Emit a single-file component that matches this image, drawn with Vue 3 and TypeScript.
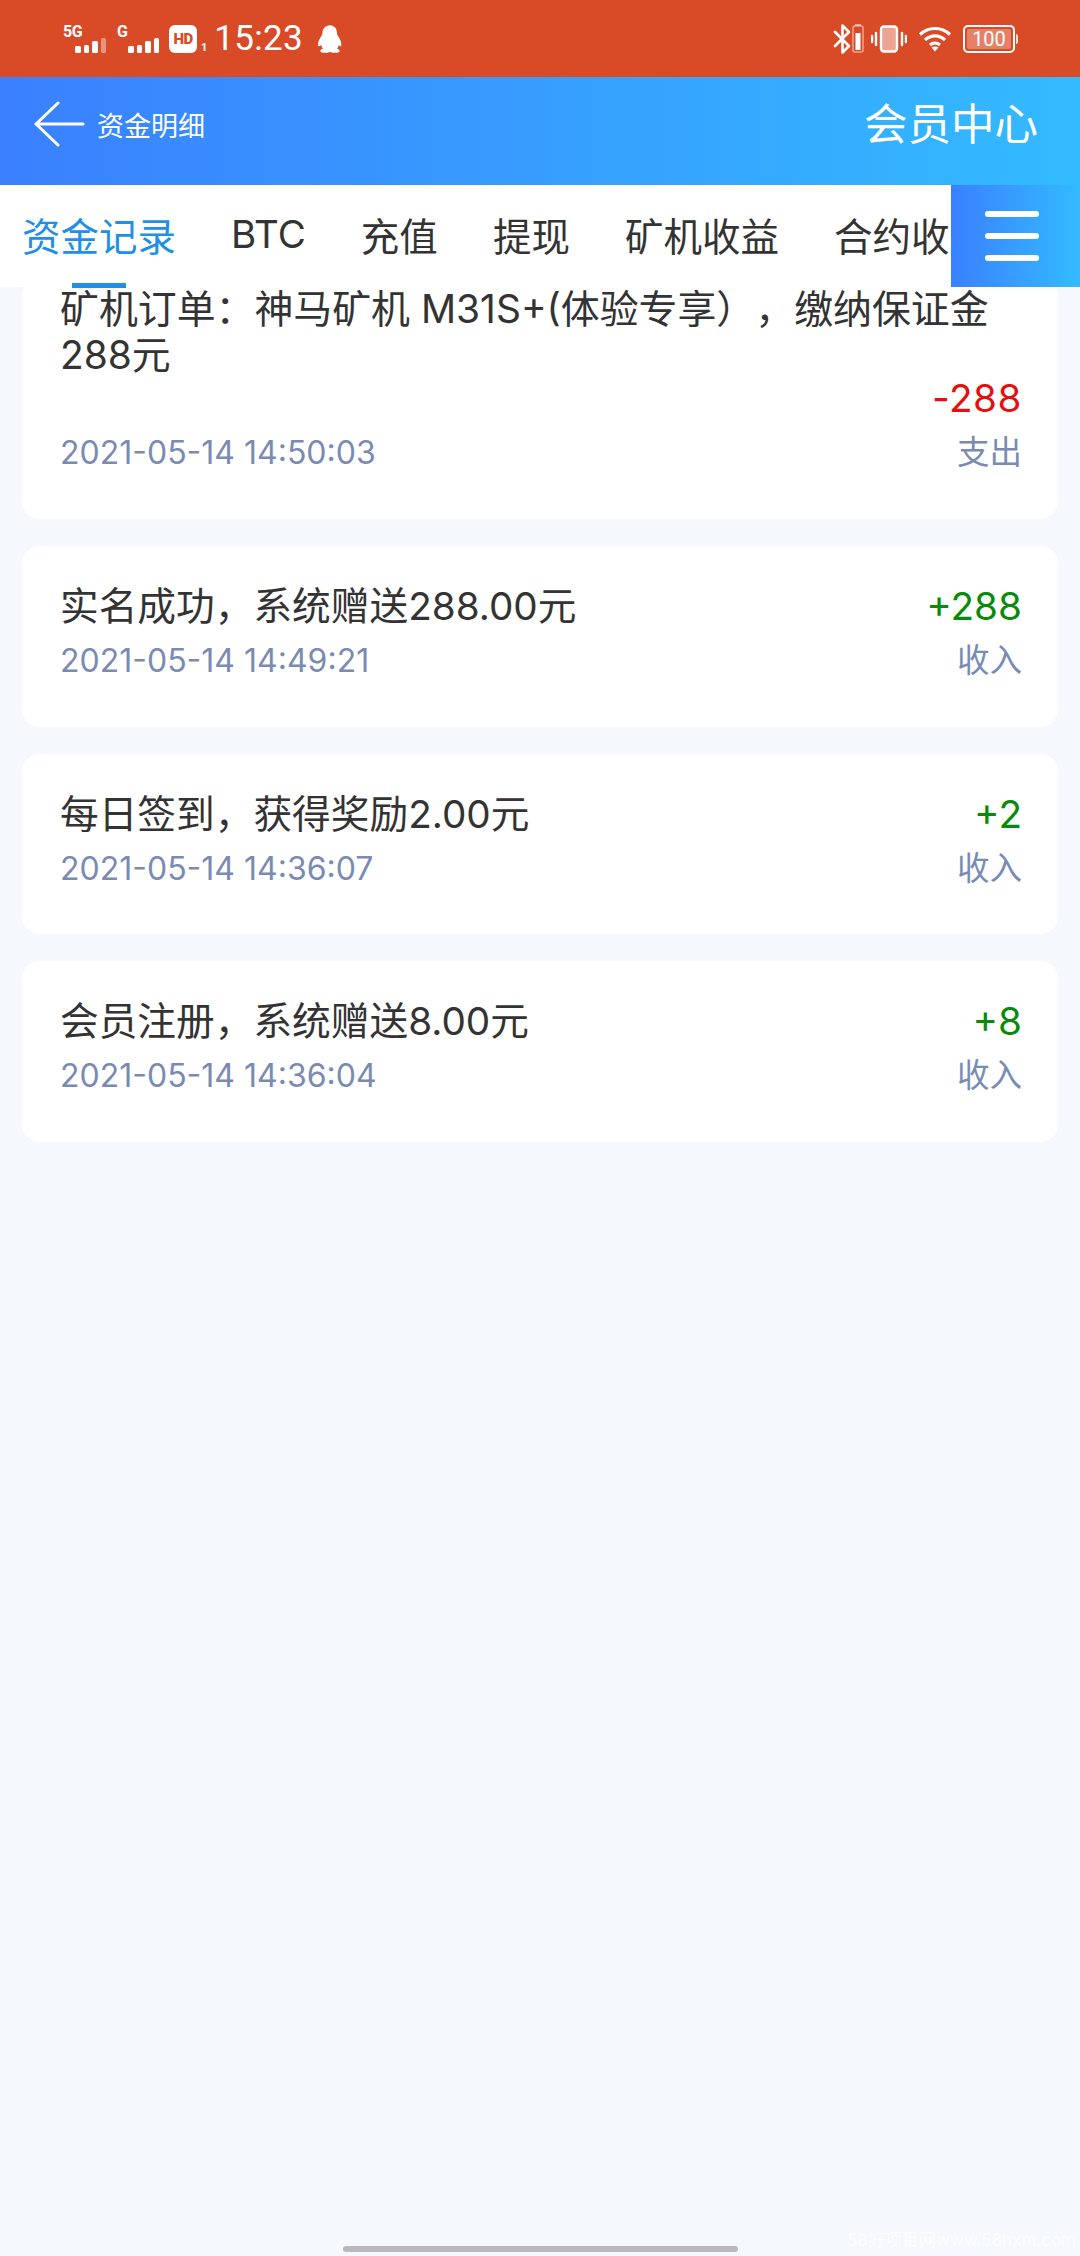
<script setup lang="ts">
interface Rec { title: string; time: string; amount: string; kind: string }
const tabs: string[] = ['资金记录', 'BTC', '充值', '提现', '矿机收益', '合约收益']
const records: Rec[] = [
  { title: '实名成功，系统赠送288.00元', time: '2021-05-14 14:49:21', amount: '+288', kind: '收入' },
  { title: '每日签到，获得奖励2.00元', time: '2021-05-14 14:36:07', amount: '+2', kind: '收入' },
  { title: '会员注册，系统赠送8.00元', time: '2021-05-14 14:36:04', amount: '+8', kind: '收入' },
]
</script>

<template>
  <div class="page">
    <div class="status">
      <div class="st-left">
        <div class="sig">
          <span class="sig-label">5G</span>
          <span class="bars"><i class="b1"></i><i class="b2"></i><i class="b3"></i><i class="b4 dim"></i></span>
        </div>
        <div class="sig sig2">
          <span class="sig-label">G</span>
          <span class="bars"><i class="b1"></i><i class="b2"></i><i class="b3"></i><i class="b4"></i></span>
        </div>
        <span class="hd">HD</span><span class="hd-n">1</span>
        <span class="clock">15:23</span>
        <svg class="qq" width="24" height="28" viewBox="0 0 26 30">
          <path fill="#fff" d="M13 0c5 0 7.500 4 7.500 8.500 0 1 .2 1.600.8 2.600 2.200 3 4 6.500 4 10 0 2-1 2.500-2.700.5-.4 1.500-1 2.800-2 3.800 1.500.6 2.800 1.300 2.800 2.500 0 1.500-3 2.100-6 2.100-2 0-3.300-.6-4.400-1.300-1.100.7-2.400 1.300-4.400 1.300-3 0-6-.6-6-2.100 0-1.200 1.300-1.900 2.800-2.500-1-1-1.600-2.300-2-3.800C1 23.600 0 23.100 0 21.100c0-3.500 1.800-7 4-10 .6-1 .8-1.600.8-2.600C4.800 4 8 0 13 0z"/>
        </svg>
      </div>
      <div class="st-right">
        <svg width="32" height="30" viewBox="0 0 32 30" fill="none">
          <path d="M2 8l14 14-6.500 6.500V1.500L16 8 2 22" stroke="#fff" stroke-width="2.600" stroke-linejoin="round" stroke-linecap="round"/>
          <rect x="20" y="2" width="10" height="26" rx="2" stroke="#fff" stroke-opacity=".5" stroke-width="1.500"/>
          <rect x="22.500" y="9" width="5" height="17" fill="#fff"/>
          <rect x="22" y="0" width="6" height="2" fill="#fff" fill-opacity=".5"/>
        </svg>
        <svg class="vib" width="36" height="28" viewBox="0 0 36 28" fill="none">
          <rect x="10" y="1.500" width="16" height="25" rx="3" fill="#fff" fill-opacity=".5" stroke="#fff" stroke-width="2.400"/>
          <path d="M5 8v12M1 11v6M31 8v12M35 11v6" stroke="#fff" stroke-width="2.400" stroke-linecap="round"/>
        </svg>
        <svg class="wifi" width="34" height="26" viewBox="0 0 34 26" fill="none">
          <path d="M2 8.500C10.500 .500 23.500 .500 32 8.500M7 14c6-5.500 14-5.500 20 0M12 19c3-2.500 7-2.500 10 0" stroke="#fff" stroke-width="3.200"/>
          <path d="M13.500 21.500c2-1.500 5-1.500 7 0L17 25.500z" fill="#fff"/>
        </svg>
        <div class="batt">
          <div class="batt-box"><span>100</span></div>
          <i class="batt-tip"></i>
        </div>
      </div>
    </div>

    <header class="head">
      <div class="back">
        <svg width="52" height="46" viewBox="0 0 52 46" fill="none">
          <path d="M25 2L3 23l22 21M3 23h47" stroke="#fff" stroke-width="3" stroke-linecap="round" stroke-linejoin="round"/>
        </svg>
        <span class="back-t">资金明细</span>
      </div>
      <span class="head-r">会员中心</span>
    </header>

    <main class="body">
      <nav class="tabs">
        <div class="tab-track">
          <span v-for="(t, i) in tabs" :key="t" class="tab" :class="{ on: i === 0 }">{{ t }}</span>
        </div>
        <i class="ind"></i>
        <button class="menu" type="button" aria-label="menu"><i></i><i></i><i></i></button>
      </nav>

      <section class="list">
        <article class="card first">
          <p class="title">矿机订单：神马矿机 M31S+(体验专享），缴纳保证金288元</p>
          <div class="row amt-row"><span class="amount out">-288</span></div>
          <div class="row meta"><span>2021-05-14 14:50:03</span><span class="kind">支出</span></div>
        </article>
        <article v-for="r in records" :key="r.time" class="card">
          <div class="row"><span class="title">{{ r.title }}</span><span class="amount">{{ r.amount }}</span></div>
          <div class="row meta"><span>{{ r.time }}</span><span class="kind">{{ r.kind }}</span></div>
        </article>
      </section>

      <i class="home"></i>
      <span class="mark">58好项目网www.58hxm.com</span>
    </main>
  </div>
</template>

<style>
html, body { margin: 0; background: #f5f8fd; }
</style>

<style scoped>
.page {
  width: 1080px;
  height: 2256px;
  overflow: hidden;
  display: flex;
  flex-direction: column;
  background: #f5f8fd;
  font-family: Inter, "Noto Sans CJK SC", sans-serif;
  text-spacing-trim: space-all;
}
.status {
  height: 77px;
  flex: none;
  background: #d94b27;
  display: flex;
  align-items: center;
  justify-content: space-between;
  padding: 0 62px 0 63px;
  color: #fff;
}
.st-left, .st-right { display: flex; align-items: center; }
.st-right svg { flex: none; }
.vib { margin-left: 6px; }
.wifi { margin-left: 11px; }
.batt { margin-left: 11px; }
.sig { display: flex; flex-direction: column; flex: none; width: 54px; height: 28px; position: relative; }
.sig-label { font: 700 16px/14px Roboto, sans-serif; letter-spacing: -.5px; }
.bars { display: flex; gap: 3px; align-items: flex-end; position: absolute; left: 12px; bottom: 0; }
.sig2 { width: 52px; }
.sig2 .bars { left: 11px; }
.bars i { display: block; width: 5.500px; background: #fff; border-radius: 1.500px; }
.bars .b1 { height: 7px; }
.bars .b2 { height: 8px; }
.bars .b3 { height: 12px; }
.bars .b4 { height: 15px; }
.bars .dim { opacity: .4; }
.hd {
  flex: none;
  width: 28px;
  height: 28px;
  background: #fff;
  border-radius: 6px;
  color: #d94b27;
  font: 900 15px/28px Roboto, sans-serif;
  text-align: center;
  letter-spacing: -.5px;
}
.hd-n { font: 700 11px/11px Roboto, sans-serif; align-self: flex-end; margin: 0 0 6px 4px; }
.clock { font: 400 35px/40px Roboto, sans-serif; margin-left: 7px; letter-spacing: .3px; }
.qq { margin-left: 15px; }
.batt { display: flex; align-items: center; gap: 1px; }
.batt-box {
  width: 52px;
  height: 28px;
  box-sizing: border-box;
  border: 2px solid #fff;
  border-radius: 5px;
  display: flex;
  align-items: center;
  justify-content: center;
}
.batt-box span {
  width: 44px;
  height: 20px;
  background: rgba(255, 255, 255, .3);
  border-radius: 2px;
  font: 400 20px/20px Roboto, sans-serif;
  text-align: center;
}
.batt-tip { width: 2px; height: 10px; background: rgba(255, 255, 255, .8); border-radius: 0 2px 2px 0; }

.head {
  height: 108px;
  box-sizing: border-box;
  padding: 0 42px 14px 33px;
  flex: none;
  background: linear-gradient(90deg, #3a80ff, #33bbff);
  display: flex;
  align-items: center;
  justify-content: space-between;
  color: #fff;
}
.back { display: flex; align-items: center; gap: 12px; }
.back-t { font-size: 27px; }
.head-r { font-size: 43.500px; padding-bottom: 5px; }

.body { flex: 1; position: relative; display: flex; flex-direction: column; }
.tabs {
  height: 102px;
  flex: none;
  background: #fff;
  position: relative;
  z-index: 2;
}
.tab-track {
  display: flex;
  gap: 55px;
  padding: 0 0 4px 22px;
  width: 951px;
  box-sizing: border-box;
  height: 102px;
  overflow: hidden;
  white-space: nowrap;
  align-items: center;
}
.tab { font-size: 38.500px; color: #333; flex: none; }
.tab.on { color: #1f8fe8; }
.ind { position: absolute; left: 72px; top: 98px; width: 54px; height: 5px; background: #1f8fe8; }
.menu {
  position: absolute;
  right: 0;
  top: 0;
  width: 129px;
  height: 102px;
  border: 0;
  padding: 0 8px 0 0;
  box-sizing: border-box;
  background: linear-gradient(90deg, #3a80ff, #33bbff);
  display: flex;
  flex-direction: column;
  justify-content: center;
  align-items: center;
  gap: 16px;
}
.menu i { display: block; width: 54px; height: 6px; border-radius: 3px; background: #fff; }

.list { display: flex; flex-direction: column; gap: 27px; padding: 0 22px; margin-top: -11px; }
.card {
  background: #fff;
  border-radius: 18px;
  height: 180.500px;
  box-sizing: border-box;
  padding: 37px 36px 0 38px;
  display: flex;
  flex-direction: column;
  gap: 8px;
}
.card.first {
  height: 243px;
  padding-top: 10px;
  gap: 0;
}
.title { margin: 0; font-size: 38.700px; line-height: 46px; color: #333; }
.first .title { font-size: 38.900px; }
.row { display: flex; justify-content: space-between; align-items: center; }
.amt-row { justify-content: flex-end; margin-top: -3px; }
.amount { font-size: 38.700px; line-height: 46px; color: #0a8a0a; }
.amount.out { color: #e50f0f; letter-spacing: .5px; }
.meta { font-size: 32px; line-height: 47px; color: #7a8bb3; }
.card.first .meta { margin-top: 8px; }
.kind { font-size: 32.500px; }
.home {
  position: absolute;
  left: 343px;
  top: 2061px;
  width: 395px;
  height: 6px;
  border-radius: 3px;
  background: #b9b9bd;
}
.mark {
  position: absolute;
  right: 4px;
  top: 2044px;
  font-size: 17px;
  line-height: 22px;
  color: rgba(255, 255, 255, .75);
}
</style>
